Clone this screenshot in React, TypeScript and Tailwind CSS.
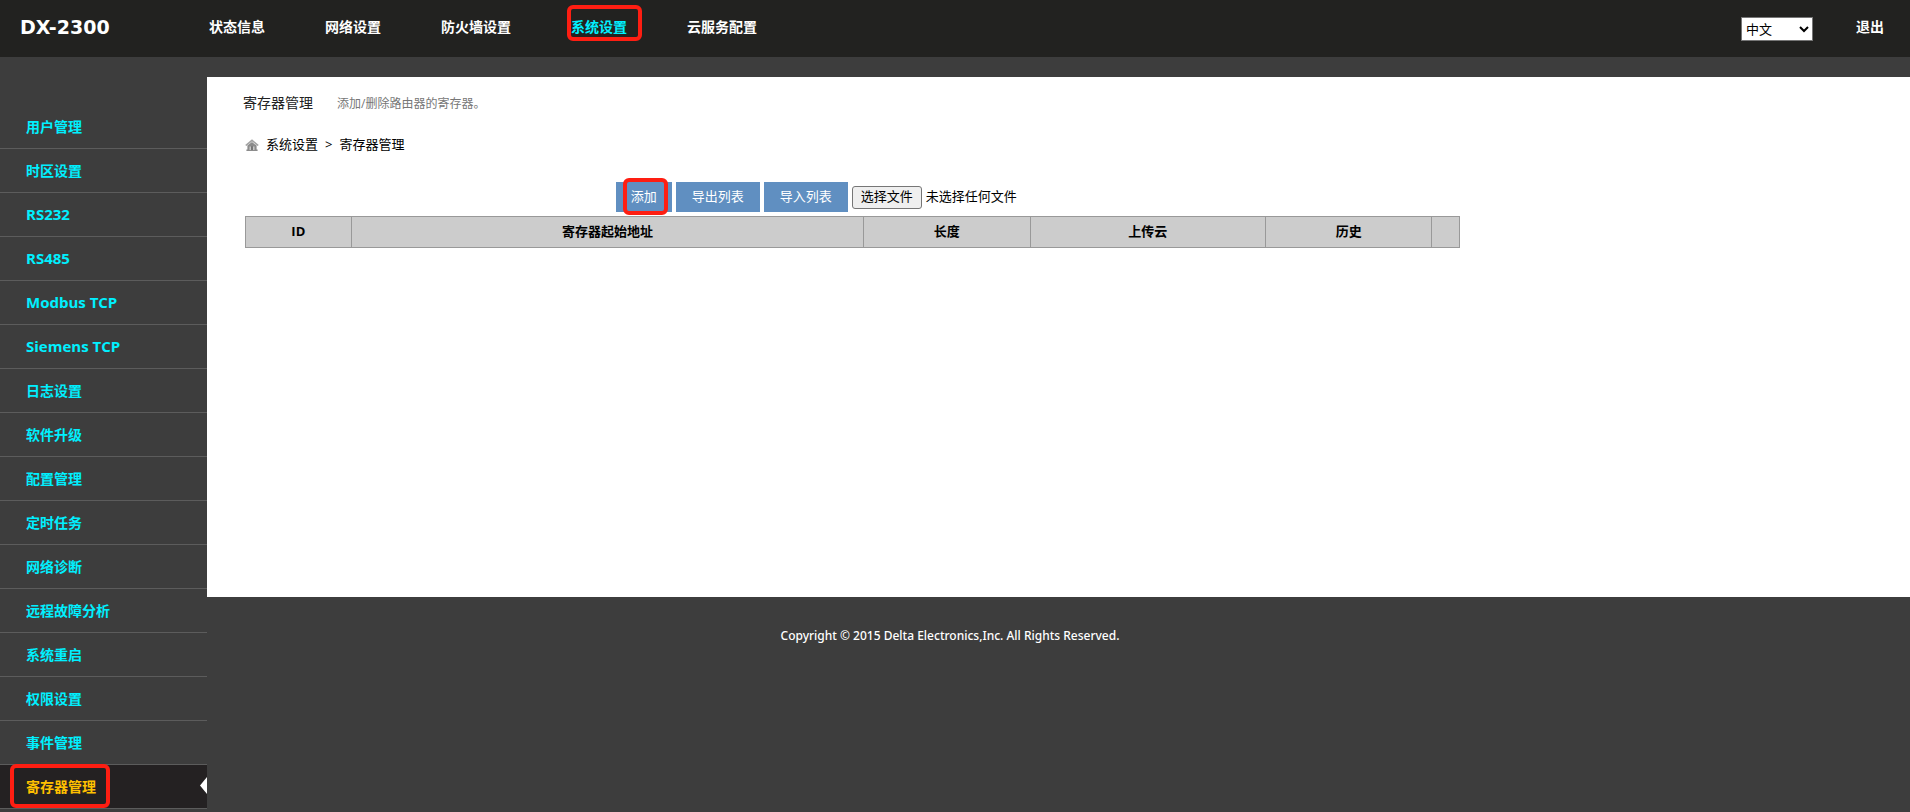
import React from "react";

const topNav = ["状态信息", "网络设置", "防火墙设置", "系统设置", "云服务配置"];

const sideNav = [
  "用户管理",
  "时区设置",
  "RS232",
  "RS485",
  "Modbus TCP",
  "Siemens TCP",
  "日志设置",
  "软件升级",
  "配置管理",
  "定时任务",
  "网络诊断",
  "远程故障分析",
  "系统重启",
  "权限设置",
  "事件管理",
  "寄存器管理",
];

const latin = /^[A-Z]/;

const columns = [
  { label: "ID", width: "w-[8.7%]" },
  { label: "寄存器起始地址", width: "w-[42.2%]" },
  { label: "长度", width: "w-[13.7%]" },
  { label: "上传云", width: "w-[19.4%]" },
  { label: "历史", width: "w-[13.7%]" },
  { label: "", width: "w-[2.3%]" },
];

function Marker({ className }: { className: string }) {
  return (
    <span
      aria-hidden="true"
      className={`pointer-events-none absolute rounded-md border-4 border-[#fe1e12] ${className}`}
    />
  );
}

function HomeIcon() {
  return (
    <svg width="14" height="13" viewBox="0 0 14 13" aria-hidden="true">
      <path d="M7 0.3 L13.8 6 L12.6 6.9 L7 2.4 L1.4 6.9 L0.2 6 Z" fill="#a3a3a3" />
      <path d="M7 3 L11.6 6.6 V10.6 H12.6 V12 H1.4 V10.6 H2.4 V6.6 Z" fill="#8c8c8c" />
      <path d="M4.6 11 V7.4 H5.8 V11 Z M8.2 11 V7.4 H9.4 V11 Z" fill="#d8d8d8" />
      <path d="M6 11 V7.2 H8 V11 Z" fill="#777777" />
    </svg>
  );
}

function Header() {
  return (
    <header className="flex h-[57px] items-center bg-[#222220] pr-[26px] pb-[3px] pl-5 font-bold text-white">
      <div className="w-[189px] font-['DejaVu_Sans'] text-[19px]">DX-2300</div>
      <nav className="flex flex-1 gap-[60px] text-sm">
        {topNav.map((label) => {
          const active = label === "系统设置";
          return (
            <a key={label} href="#" className={active ? "relative text-[#00f0ff]" : "relative"}>
              {label}
              {active && <Marker className="-top-3 -right-[15px] -bottom-1 -left-1" />}
            </a>
          );
        })}
      </nav>
      <select
        aria-label="语言"
        className="mt-1 mr-[43px] h-6 w-[72px] border border-[#767676] bg-white text-[13px] font-normal text-black"
      >
        <option>中文</option>
        <option>English</option>
      </select>
      <a href="#" className="text-sm">
        退出
      </a>
    </header>
  );
}

function Sidebar() {
  return (
    <aside className="w-[207px] shrink-0 pt-12">
      <ul>
        {sideNav.map((label) => {
          const active = label === "寄存器管理";
          return (
            <li
              key={label}
              className={
                active
                  ? "relative h-11 border-b border-[#5c5c5c] bg-[#242122] text-[#ffc000]"
                  : "h-11 border-b border-[#5c5c5c] text-[#00f0ff]"
              }
            >
              <a
                href="#"
                className={`flex h-full items-center pl-[26px] font-bold ${
                  latin.test(label) ? "text-[15px]" : "text-sm"
                }`}
              >
                {label}
              </a>
              {active && (
                <>
                  <Marker className="-top-px bottom-0 left-[10px] w-[100px]" />
                  <svg
                    className="absolute top-3 right-0"
                    width="7"
                    height="17"
                    viewBox="0 0 7 17"
                    aria-hidden="true"
                  >
                    <path d="M7 0 V17 L0 8.5 Z" fill="#ffffff" />
                  </svg>
                </>
              )}
            </li>
          );
        })}
      </ul>
    </aside>
  );
}

function Toolbar() {
  const button = "h-[30px] bg-[#608fc1] text-white";
  return (
    <div className="flex items-center justify-center gap-1 text-[13px]">
      <button type="button" className={`relative px-[15px] ${button}`}>
        添加
        <Marker className="-top-1 right-1 -bottom-[3px] left-[7px]" />
      </button>
      <button type="button" className={`px-4 ${button}`}>
        导出列表
      </button>
      <button type="button" className={`px-4 ${button}`}>
        导入列表
      </button>
      <div className="relative flex w-[238px] items-center gap-1">
        <input id="register-file" type="file" className="peer sr-only" />
        <label
          htmlFor="register-file"
          className="flex h-[23px] items-center rounded-[3px] border border-[#767676] bg-[#efefef] px-2 text-black"
        >
          选择文件
        </label>
        <span>未选择任何文件</span>
      </div>
    </div>
  );
}

export default function App() {
  return (
    <div className="min-h-screen bg-[#3d3d3d] font-['Open_Sans','Noto_Sans_CJK_SC',sans-serif]">
      <Header />
      <div className="flex">
        <Sidebar />
        <div className="flex-1 pt-5">
          <main className="min-h-[520px] bg-white pt-4 pl-[38px] text-black">
            <div className="-ml-0.5 flex items-baseline gap-6">
              <h1 className="text-sm text-[#222222]">寄存器管理</h1>
              <p className="text-xs text-[#777777]">添加/删除路由器的寄存器。</p>
            </div>
            <div className="mt-[22px] flex h-5 items-center gap-[7px] text-[13px]">
              <HomeIcon />
              <a href="#">系统设置</a>
              <span>&gt;</span>
              <span>寄存器管理</span>
            </div>
            <div className="mt-[27px] w-[73%]">
              <Toolbar />
              <table className="mt-1 w-full table-fixed border-collapse text-[13px]">
                <thead>
                  <tr className="h-[31px] bg-[#cccccc]">
                    {columns.map((column, index) => (
                      <th
                        key={index}
                        scope="col"
                        className={`border border-[#999999] p-0 font-bold ${column.width}`}
                      >
                        {column.label}
                      </th>
                    ))}
                  </tr>
                </thead>
              </table>
            </div>
          </main>
          <footer className="pt-[29px] pr-[217px] text-center font-['Noto_Sans',sans-serif] text-xs leading-5 font-medium text-white">
            Copyright © 2015 Delta Electronics,Inc. All Rights Reserved.
          </footer>
        </div>
      </div>
    </div>
  );
}
